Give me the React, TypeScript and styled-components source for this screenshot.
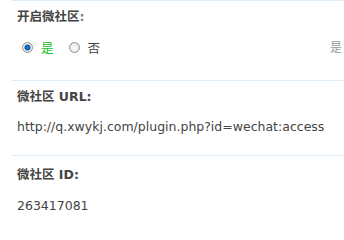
import React, { useState } from "react";
import styled, { createGlobalStyle } from "styled-components";

const GlobalStyle = createGlobalStyle`
  html, body {
    margin: 0;
    padding: 0;
    background: #fff;
  }
  body {
    font-family: Tahoma, "DejaVu Sans", "Noto Sans CJK SC", sans-serif;
    font-size: 12px;
    color: #444;
  }
`;

const Panel = styled.div`
  width: 344px;
  height: 219px;
  overflow: hidden;
  position: relative;
`;

const Section = styled.div<{ $top: number; $gap: number; $bottom: number }>`
  margin-left: 12px;
  padding: ${({ $top, $bottom }) => `${$top}px 0 ${$bottom}px 5px`};
  border-top: 1px dotted #c4e0f6;
  display: flex;
  flex-direction: column;
  gap: ${({ $gap }) => $gap}px;
`;

const Label = styled.div`
  line-height: 20px;
  font-weight: bold;
  color: #444;
  font-family: "DejaVu Sans", "Noto Sans CJK SC", sans-serif;
  font-size: 12.5px;
`;

const Colon = styled.span`
  color: #6a7f99;
`;

const Value = styled.div`
  line-height: 20px;
  color: #444;
  font-family: "DejaVu Sans", "Noto Sans CJK SC", sans-serif;
  font-size: 12.5px;
  white-space: nowrap;
`;

const RadioRow = styled.div`
  display: flex;
  align-items: center;
  height: 20px;
  padding-left: 5px;
`;

const RadioItem = styled.label<{ $checked: boolean }>`
  display: inline-flex;
  align-items: center;
  margin-right: 15px;
  cursor: pointer;
  font-family: "Noto Sans CJK SC", sans-serif;
  font-size: 12.5px;
  color: ${({ $checked }) => ($checked ? "#1bbd1b" : "#444")};
`;

const RadioDot = styled.span<{ $checked: boolean }>`
  box-sizing: border-box;
  width: 11px;
  height: 11px;
  border-radius: 50%;
  margin-right: 8px;
  border: 1px solid #8e8f8f;
  background: ${({ $checked }) =>
    $checked
      ? "radial-gradient(circle, #1a78c8 0, #0f5ea8 2.5px, #e6e6e6 3.5px, #f6f6f6 5px)"
      : "radial-gradient(circle at 50% 60%, #ffffff 0, #e4e4e4 5px)"};
`;

const SideHint = styled.span`
  position: absolute;
  right: 2px;
  top: 38px;
  color: #999;
  font-family: "Noto Sans CJK SC", sans-serif;
  font-size: 12px;
`;

export default function App() {
  const [open, setOpen] = useState(true);
  return (
    <Panel>
      <GlobalStyle />
      <Section $top={6} $gap={10} $bottom={23}>
        <Label>
          开启微社区<Colon>:</Colon>
        </Label>
        <RadioRow>
          <RadioItem $checked={open} onClick={() => setOpen(true)}>
            <RadioDot $checked={open} />是
          </RadioItem>
          <RadioItem $checked={!open} onClick={() => setOpen(false)}>
            <RadioDot $checked={!open} />否
          </RadioItem>
        </RadioRow>
      </Section>
      <SideHint>是</SideHint>
      <Section $top={6} $gap={10} $bottom={18}>
        <Label>微社区 URL:</Label>
        <Value>http://q.xwykj.com/plugin.php?id=wechat:access</Value>
      </Section>
      <Section $top={9} $gap={11} $bottom={0}>
        <Label>微社区 ID:</Label>
        <Value>263417081</Value>
      </Section>
    </Panel>
  );
}
